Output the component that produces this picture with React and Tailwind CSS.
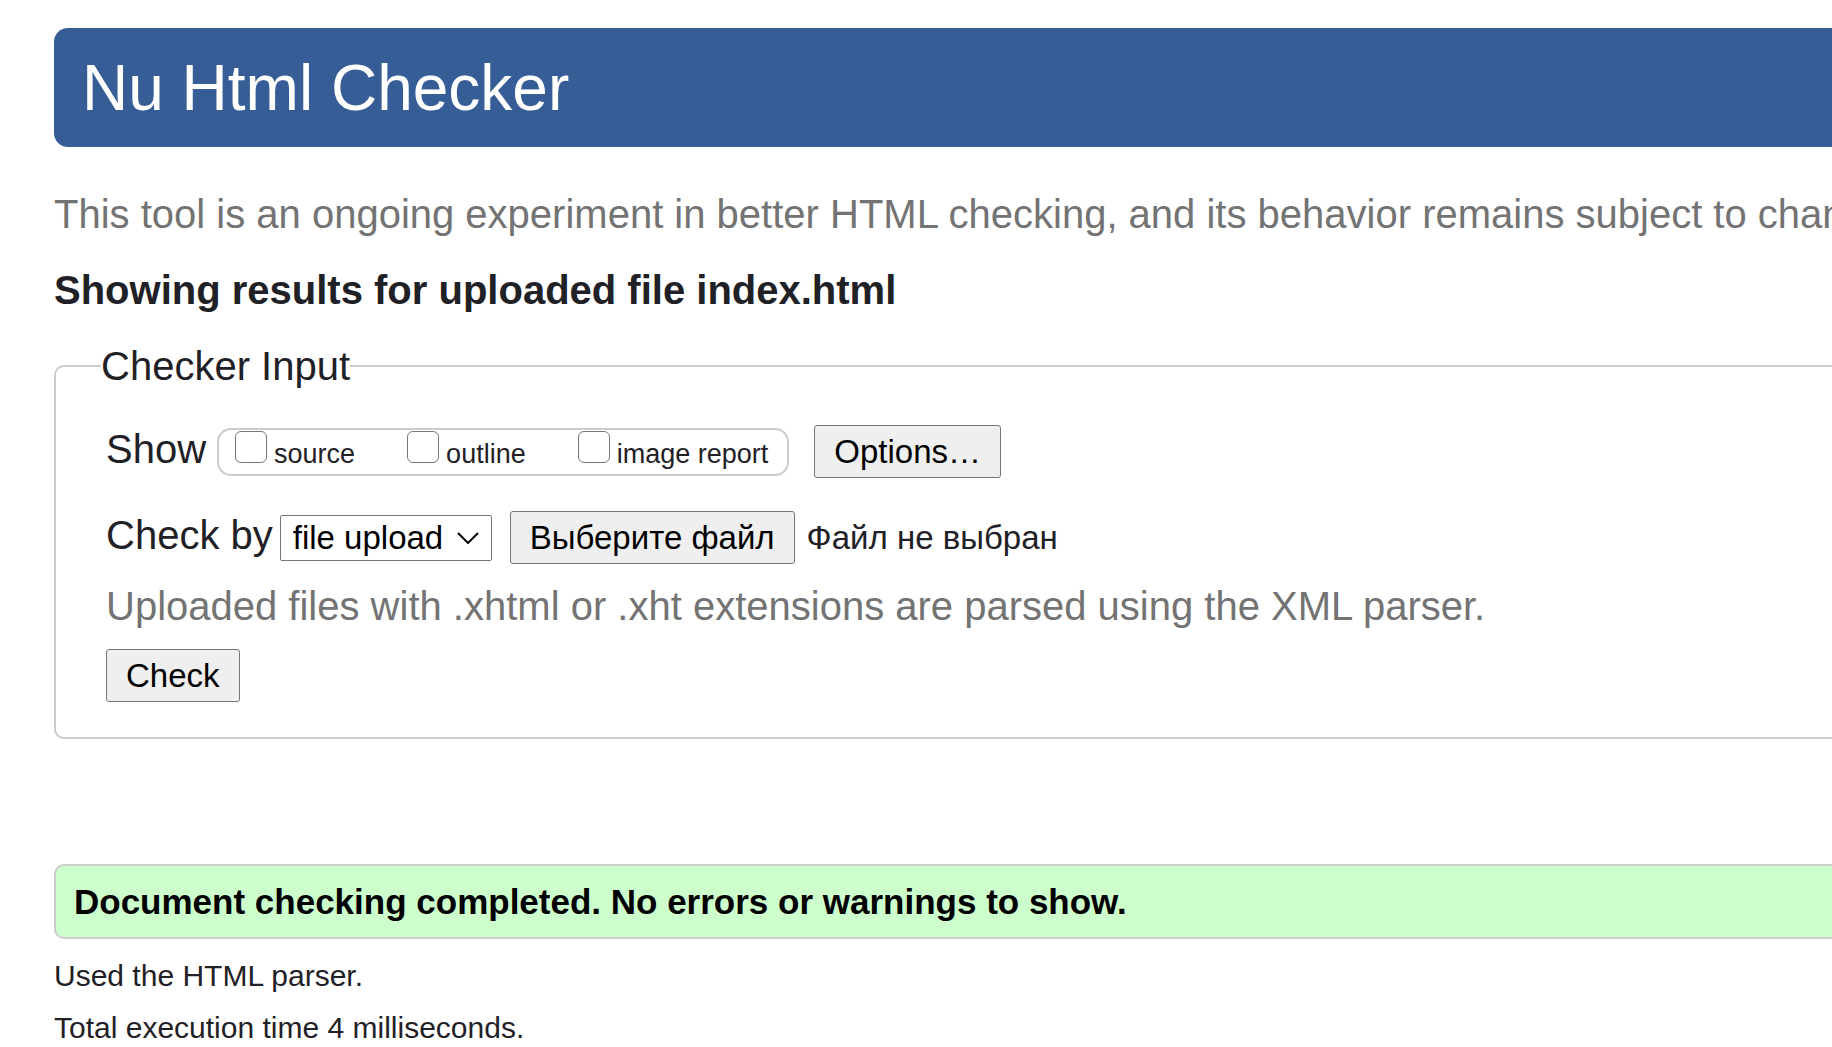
import { useRef } from "react";

const buttonClass =
  "h-[53px] shrink-0 rounded-[3px] border-[1px] border-[#767676] bg-[#efefef] px-[19px] text-[33px] leading-[48px] text-black";

function ShowOption({ id, label }) {
  return (
    <span className="flex items-baseline gap-[7px]">
      <input
        id={id}
        type="checkbox"
        className="mt-px size-8 appearance-none rounded-[6px] border border-[#767676] bg-white checked:bg-[#0075ff]"
      />
      <label htmlFor={id} className="text-[27px] leading-8">
        {label}
      </label>
    </span>
  );
}

export default function App() {
  const fileInput = useRef(null);

  return (
    <div className="min-h-screen overflow-hidden bg-white pt-7 pl-[54px] font-['Liberation_Sans',Arial,sans-serif] text-[#1f2126]">
      <header className="rounded-l-[14px] bg-[#365d96] pt-[23px] pb-[21px] pl-7">
        <h1 className="text-[64px] leading-[75px] text-white">Nu Html Checker</h1>
      </header>

      <main>
        <p className="mt-11 text-[40px] leading-[46px] whitespace-nowrap text-[#737373]">
          This tool is an ongoing experiment in better HTML checking, and its behavior remains subject to change
        </p>
        <h2 className="mt-[30px] text-[40px] leading-[46px] font-bold">
          Showing results for uploaded file index.html
        </h2>

        <form onSubmit={(event) => event.preventDefault()}>
          <fieldset className="mt-[30px] rounded-l-[10px] border-2 border-r-0 border-[#cccccc] pb-[35px] pl-[50px]">
            <legend className="-ml-[5px] text-[40px] leading-[46px]">Checker Input</legend>

            <div className="mt-9 flex items-baseline">
              <span className="text-[40px] leading-[46px]">Show</span>
              <div className="ml-[11px] flex h-12 items-baseline gap-[52px] rounded-[14px] border-2 border-[#cccccc] pr-[19px] pl-4">
                <ShowOption id="show-source" label="source" />
                <ShowOption id="show-outline" label="outline" />
                <ShowOption id="show-image-report" label="image report" />
              </div>
              <button type="button" className={`ml-[25px] ${buttonClass}`}>
                Options…
              </button>
            </div>

            <div className="mt-[33px] flex items-baseline">
              <label htmlFor="check-by" className="text-[40px] leading-[46px]">
                Check by
              </label>
              <div className="ml-[7px] grid items-center">
                <select
                  id="check-by"
                  className="col-start-1 row-start-1 h-[46px] appearance-none rounded-[2px] border border-[#767676] bg-white pr-[47px] pl-3 text-[33px] leading-10 text-black"
                >
                  <option>file upload</option>
                </select>
                <svg
                  className="pointer-events-none col-start-1 row-start-1 mr-[13px] h-3 w-[22px] justify-self-end"
                  viewBox="0 0 22 12"
                  fill="none"
                  stroke="#000"
                  strokeWidth="2"
                  aria-hidden="true"
                >
                  <path d="M1 1l10 10L21 1" />
                </svg>
              </div>
              <button
                type="button"
                className={`ml-[18px] ${buttonClass}`}
                onClick={() => fileInput.current.click()}
              >
                Выберите файл
              </button>
              <input ref={fileInput} type="file" aria-label="Выберите файл" className="hidden" />
              <span className="ml-3 text-[33px] leading-[38px]">Файл не выбран</span>
            </div>

            <p className="mt-[19px] text-[40px] leading-[46px] text-[#737373]">
              Uploaded files with .xhtml or .xht extensions are parsed using the XML parser.
            </p>
            <button type="submit" className={`mt-5 ${buttonClass}`}>
              Check
            </button>
          </fieldset>
        </form>

        <section className="mt-[125px]">
          <p className="rounded-l-[10px] border-2 border-r-0 border-[#cccccc] bg-[#ccffcc] py-4 pl-[18px] text-[35px] leading-[39px] font-bold text-black">
            Document checking completed. No errors or warnings to show.
          </p>
          <p className="mt-5 text-[30px] leading-[34px]">Used the HTML parser.</p>
          <p className="mt-[18px] text-[30px] leading-[34px]">Total execution time 4 milliseconds.</p>
        </section>
      </main>
    </div>
  );
}
